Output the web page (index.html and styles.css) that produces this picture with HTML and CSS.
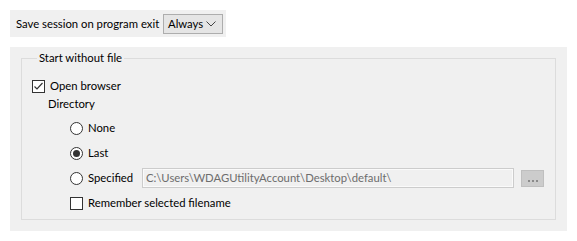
FILE: index.html
```html
<!DOCTYPE html>
<html lang="en">
<head>
    <meta charset="UTF-8">
    <title>Session settings</title>
    <link rel="stylesheet" href="styles.css">
</head>
<body>
    <div class="session-bar">
        <span class="session-label">Save session on program exit</span>
        <div class="combo">
            <span>Always</span>
            <svg class="combo-arrow" width="10" height="6" viewBox="0 0 10 6">
                <path d="M0.5 0.5 L5 5 L9.5 0.5" fill="none" stroke="#444" stroke-width="1"/>
            </svg>
        </div>
    </div>

    <div class="panel">
        <fieldset class="group">
            <legend>Start without file</legend>

            <label class="check-row">
                <span class="checkbox checked">
                    <svg width="11" height="11" viewBox="0 0 11 11">
                        <path d="M1.5 5.5 L4 8 L9.5 2" fill="none" stroke="#333" stroke-width="1.2"/>
                    </svg>
                </span>
                Open browser
            </label>

            <div class="dir-label">Directory</div>

            <div class="options">
                <label class="radio-row">
                    <span class="radio"></span>
                    None
                </label>
                <label class="radio-row">
                    <span class="radio selected"></span>
                    Last
                </label>
                <div class="radio-row">
                    <span class="radio"></span>
                    <span class="spec-label">Specified</span>
                    <div class="path-field">C:\Users\WDAGUtilityAccount\Desktop\default\</div>
                    <div class="browse-btn"><span></span><span></span><span></span></div>
                </div>
                <label class="radio-row">
                    <span class="checkbox"></span>
                    Remember selected filename
                </label>
            </div>
        </fieldset>
    </div>
</body>
</html>
```

FILE: styles.css
```css
* {
    margin: 0;
    padding: 0;
    box-sizing: border-box;
}

body {
    font-family: Lato, "Noto Sans", sans-serif;
    font-size: 11.3px;
    line-height: 16px;
    color: #000000;
    background: #ffffff;
    padding: 10px;
}

.session-bar {
    display: inline-flex;
    align-items: center;
    background: #f0f0f0;
    width: 216px;
    height: 27px;
    padding: 0 3px 0 6px;
}

.session-label {
    flex: 1;
}

.combo {
    display: flex;
    align-items: center;
    justify-content: space-between;
    width: 60px;
    height: 20px;
    padding: 0 6px 0 4px;
    border: 1px solid #adadad;
    background: #e5e5e5;
}

.panel {
    margin-top: 10px;
    width: 557px;
    height: 184px;
    background: #f0f0f0;
    padding: 3px 11px 11px 11px;
}

.group {
    height: 170px;
    border: 1px solid #dcdcdc;
    padding: 0 10px;
}

.group legend {
    padding: 0 2px;
    margin-left: 5px;
    height: 16px;
}

.check-row,
.radio-row {
    display: flex;
    align-items: center;
}

.check-row {
    height: 16px;
    margin-top: 12px;
}

.checkbox {
    width: 13px;
    height: 13px;
    border: 1px solid #333333;
    background: #ffffff;
    margin-right: 5px;
    display: flex;
    align-items: center;
    justify-content: center;
}

.dir-label {
    margin: 2px 0 0 16px;
    height: 16px;
}

.options {
    padding-left: 38px;
    margin-top: 6px;
    display: flex;
    flex-direction: column;
    gap: 5px;
}

.radio-row {
    height: 20px;
}

.radio {
    width: 13px;
    height: 13px;
    border: 1px solid #333333;
    border-radius: 50%;
    background: #ffffff;
    margin-right: 5px;
    display: flex;
    align-items: center;
    justify-content: center;
}

.radio.selected::after {
    content: '';
    width: 7px;
    height: 7px;
    border-radius: 50%;
    background: #333333;
}

.spec-label {
    width: 54px;
}

.path-field {
    width: 372px;
    height: 20px;
    border: 1px solid #cccccc;
    box-shadow: inset 0 0 0 1px #fafafa;
    background: #f0f0f0;
    color: #6d6d6d;
    padding: 0 3px;
    line-height: 18px;
    white-space: nowrap;
    overflow: hidden;
}

.browse-btn {
    width: 23px;
    height: 17px;
    margin-left: 7px;
    background: #cccccc;
    border: 1px solid #bfbfbf;
    display: flex;
    align-items: flex-end;
    justify-content: center;
    gap: 2px;
    padding-bottom: 4px;
}

.browse-btn span {
    width: 2px;
    height: 2px;
    background: #8a8a8a;
}
```
